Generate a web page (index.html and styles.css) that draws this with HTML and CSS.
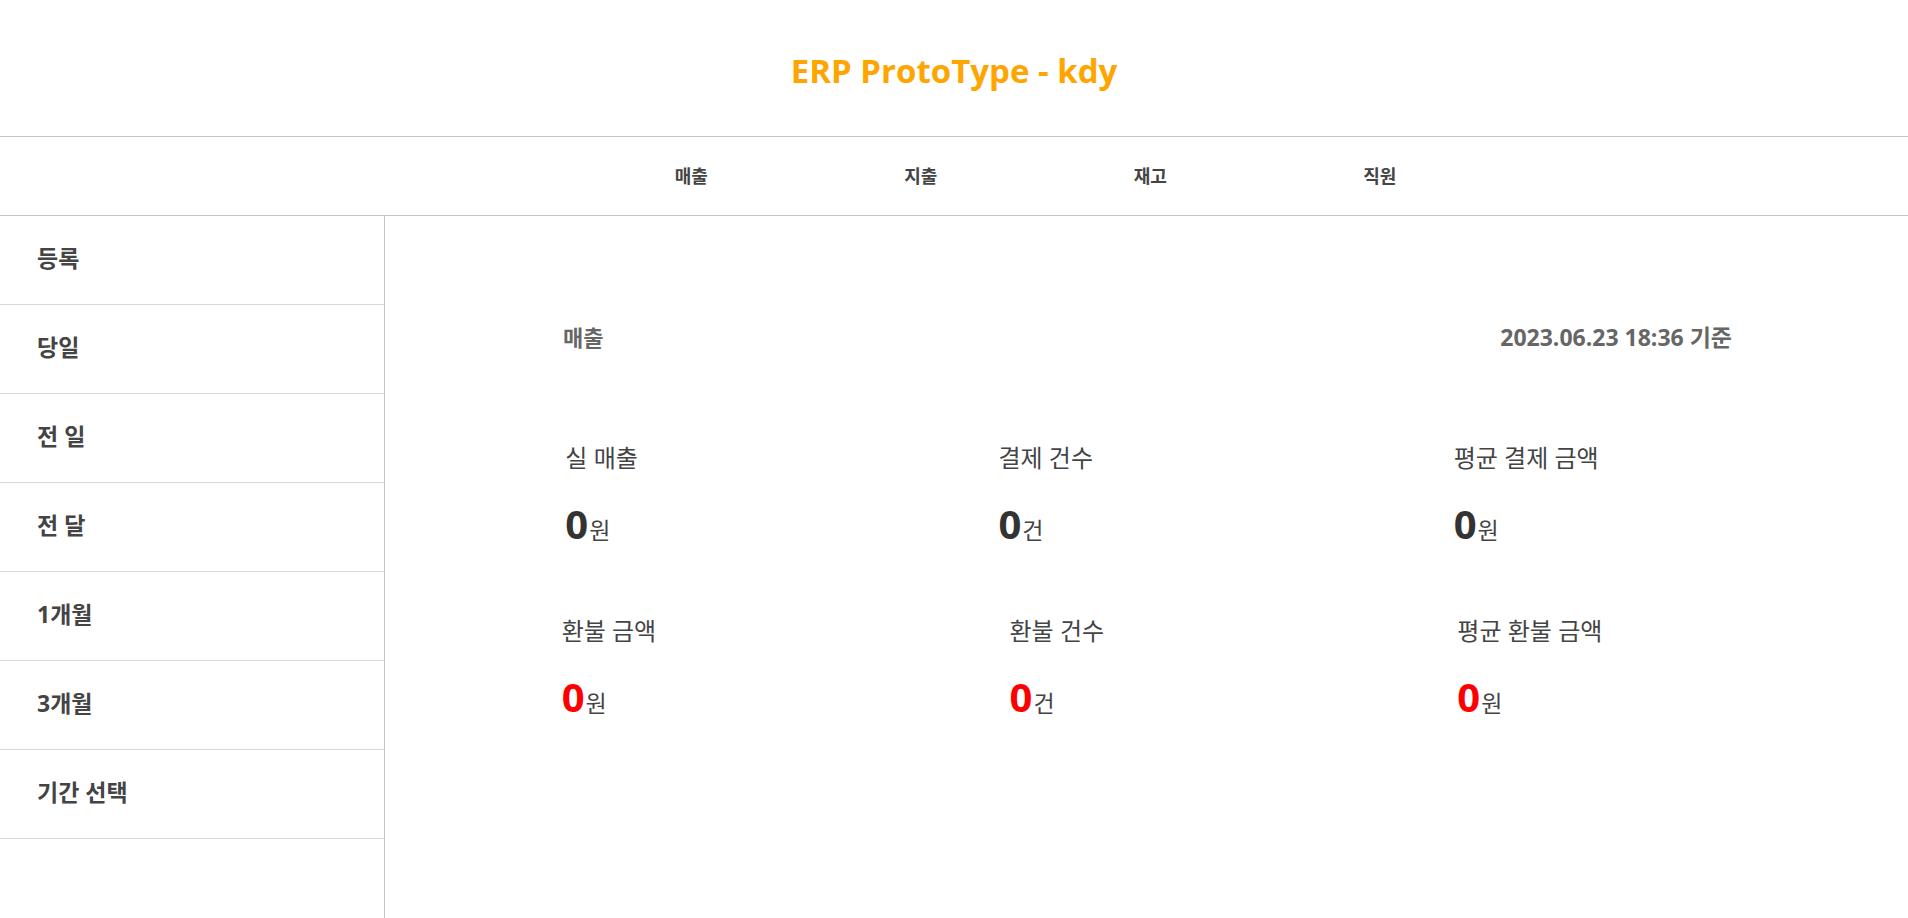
FILE: index.html
```html
<!DOCTYPE html>
<html lang="ko">
<head>
<meta charset="utf-8">
<title>ERP ProtoType - kdy</title>
<link rel="stylesheet" href="styles.css">
</head>
<body>
<div class="page">
  <header class="top">
    <h1 class="brand">ERP ProtoType - kdy</h1>
  </header>
  <nav class="gnb">
    <ul class="gnb-list">
      <li class="gnb-item">매출</li>
      <li class="gnb-item">지출</li>
      <li class="gnb-item">재고</li>
      <li class="gnb-item">직원</li>
    </ul>
  </nav>
  <div class="body">
    <aside class="side">
      <ul class="side-list">
        <li class="side-item">등록</li>
        <li class="side-item">당일</li>
        <li class="side-item">전 일</li>
        <li class="side-item">전 달</li>
        <li class="side-item">1개월</li>
        <li class="side-item">3개월</li>
        <li class="side-item">기간 선택</li>
      </ul>
    </aside>
    <main class="main">
      <div class="sec-head">
        <span class="sec-title">매출</span>
        <span class="sec-date">2023.06.23 18:36 기준</span>
      </div>
      <div class="stat-row">
        <div class="stat">
          <div class="stat-label">실 매출</div>
          <div class="stat-value"><span class="num">0</span><span class="unit">원</span></div>
        </div>
        <div class="stat">
          <div class="stat-label">결제 건수</div>
          <div class="stat-value"><span class="num">0</span><span class="unit">건</span></div>
        </div>
        <div class="stat">
          <div class="stat-label">평균 결제 금액</div>
          <div class="stat-value"><span class="num">0</span><span class="unit">원</span></div>
        </div>
      </div>
      <div class="stat-row refund">
        <div class="stat">
          <div class="stat-label">환불 금액</div>
          <div class="stat-value"><span class="num red">0</span><span class="unit">원</span></div>
        </div>
        <div class="stat">
          <div class="stat-label">환불 건수</div>
          <div class="stat-value"><span class="num red">0</span><span class="unit">건</span></div>
        </div>
        <div class="stat">
          <div class="stat-label">평균 환불 금액</div>
          <div class="stat-value"><span class="num red">0</span><span class="unit">원</span></div>
        </div>
      </div>
    </main>
  </div>
</div>
</body>
</html>
```

FILE: styles.css
```css
* { box-sizing: border-box; }
html, body { margin: 0; padding: 0; height: 100%; }
body {
  font-family: "Open Sans", "Noto Sans CJK KR", sans-serif;
  color: #444;
  background: #fff;
}
.page {
  display: flex;
  flex-direction: column;
  min-height: 100vh;
}
.top {
  height: 137px;
  border-bottom: 1px solid #c4c4c4;
  display: flex;
  align-items: center;
  justify-content: center;
}
.brand {
  margin: 0;
  font-size: 33px;
  font-weight: 700;
  color: #ffa500;
  line-height: 40px;
  padding-top: 6px;
}
.gnb {
  height: 79px;
  border-bottom: 1px solid #c4c4c4;
  display: flex;
  align-items: center;
  justify-content: center;
  padding-left: 163px;
}
.gnb-list {
  list-style: none;
  margin: 0;
  padding: 0;
  display: flex;
}
.gnb-item {
  width: 229.5px;
  text-align: center;
  font-size: 18px;
  font-weight: 700;
  color: #444;
  line-height: 22px;
}
.body {
  flex: 1;
  display: flex;
}
.side {
  width: 385px;
  flex: none;
  border-right: 1px solid #c4c4c4;
}
.side-list {
  list-style: none;
  margin: 0;
  padding: 0;
}
.side-item {
  height: 89px;
  border-bottom: 1px solid #d9d9d9;
  display: flex;
  align-items: center;
  padding-left: 37px;
  padding-bottom: 6px;
  font-size: 23px;
  font-weight: 700;
  color: #444;
}
.main {
  flex: 1;
  padding: 108px 129px 0 0;
}
.sec-head {
  display: flex;
  justify-content: space-between;
  padding: 0 47px 0 178px;
  line-height: 26px;
  font-size: 22px;
  font-weight: 700;
  color: #666;
}
.sec-date {
  font-size: 23px;
}
.stat-row {
  display: flex;
  justify-content: space-around;
  margin-top: 94px;
}
.stat-row.refund {
  margin-top: 69px;
}
.stat-label {
  font-size: 24px;
  line-height: 28px;
  color: #444;
}
.stat-value {
  margin-top: 28px;
  line-height: 48px;
  height: 48px;
  white-space: nowrap;
}
.num {
  font-size: 40px;
  font-weight: 700;
  color: #333;
}
.num.red { color: #ff0000; }
.unit {
  font-size: 23px;
  color: #444;
  margin-left: 1px;
}
```
